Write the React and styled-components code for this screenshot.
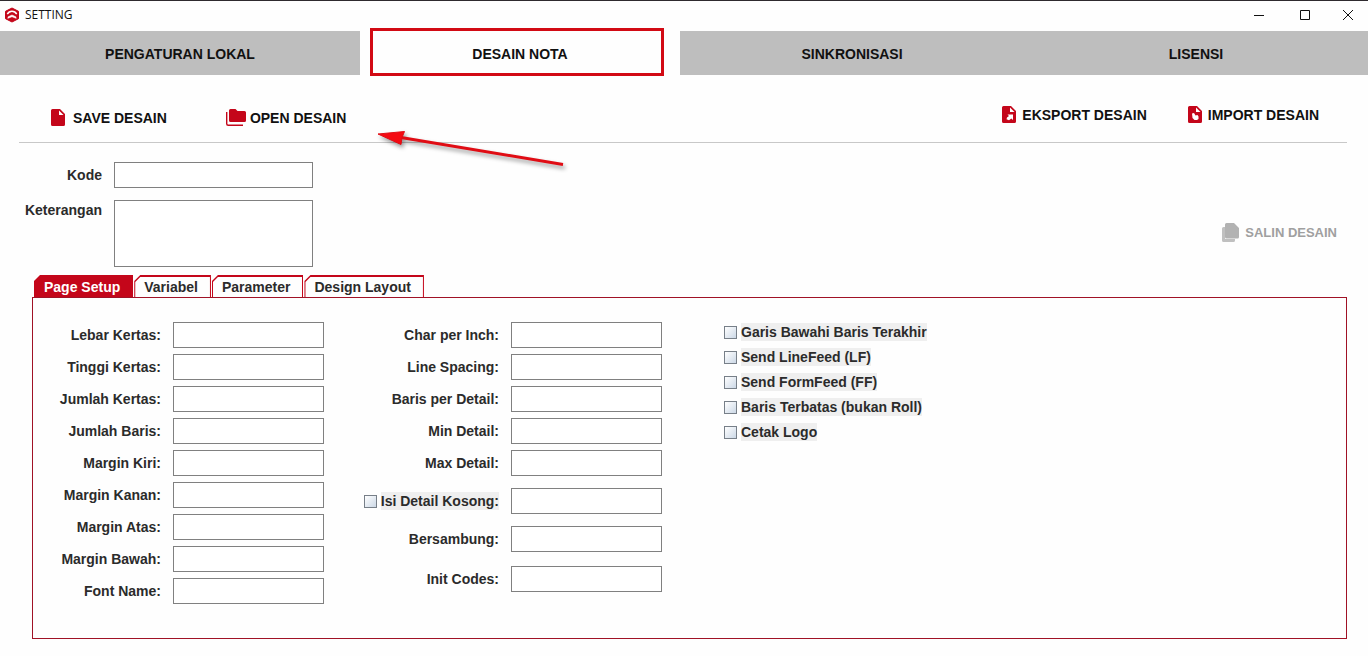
import React from "react";
import styled, { createGlobalStyle } from "styled-components";

const leftFields = [
  "Lebar Kertas:",
  "Tinggi Kertas:",
  "Jumlah Kertas:",
  "Jumlah Baris:",
  "Margin Kiri:",
  "Margin Kanan:",
  "Margin Atas:",
  "Margin Bawah:",
  "Font Name:",
];

const middleFields = [
  "Char per Inch:",
  "Line Spacing:",
  "Baris per Detail:",
  "Min Detail:",
  "Max Detail:",
];

const options = [
  "Garis Bawahi Baris Terakhir",
  "Send LineFeed (LF)",
  "Send FormFeed (FF)",
  "Baris Terbatas (bukan Roll)",
  "Cetak Logo",
];

const navItems = ["PENGATURAN LOKAL", "DESAIN NOTA", "SINKRONISASI", "LISENSI"];
const tabs = ["Page Setup", "Variabel", "Parameter", "Design Layout"];

const toId = (label) => label.toLowerCase().replace(/[^a-z]+/g, "-");

const LogoIcon = () => (
  <svg width="16" height="16" viewBox="0 0 16 16" fill="none">
    <path d="M8 1 14.500 4.300v7.400L8 15 1.500 11.700V4.300z" fill="#c4061a" stroke="#c4061a" strokeLinejoin="round" />
    <path d="M3.300 7.200C4.500 5 6 4.300 8 4.300s3.500.7 4.700 2.900" stroke="#fff" strokeWidth="1.400" />
    <path d="M3.800 11.300 4.200 9.800 8 8l3.800 1.800.4 1.500L8 9.700z" fill="#fff" stroke="#fff" strokeWidth="0.600" />
  </svg>
);

const FileIcon = () => (
  <svg width="14" height="17" viewBox="0 0 14 17">
    <path d="M1.500 0H9l5 5v10.500A1.500 1.500 0 0 1 12.500 17h-11A1.500 1.500 0 0 1 0 15.500v-14A1.500 1.500 0 0 1 1.500 0z" fill="#c4061a" />
    <path d="M8 1.500V6h4.500z" fill="#fff" />
  </svg>
);

const FoldersIcon = () => (
  <svg width="20" height="17" viewBox="0 0 20 17">
    <path d="M4.500 0h5l2 2H18.500A1.500 1.500 0 0 1 20 3.500v8A1.500 1.500 0 0 1 18.500 13h-14A1.500 1.500 0 0 1 3 11.500v-10A1.500 1.500 0 0 1 4.500 0z" fill="#c4061a" />
    <path d="M0.700 3v11.800a1.500 1.500 0 0 0 1.500 1.500H17" fill="none" stroke="#c4061a" strokeWidth="1.400" />
  </svg>
);

const ExportIcon = () => (
  <svg width="14" height="17" viewBox="0 0 14 17">
    <path d="M1.500 0H9l5 5v10.500A1.500 1.500 0 0 1 12.500 17h-11A1.500 1.500 0 0 1 0 15.500v-14A1.500 1.500 0 0 1 1.500 0z" fill="#c4061a" />
    <path d="M8 1.500V6h4.500z" fill="#fff" />
    <path d="M5.500 8.500H11V14L9.300 12.500 7 14.300 4.500 13.300 5 11.500 7 10z" fill="#fff" />
  </svg>
);

const ImportIcon = () => (
  <svg width="14" height="17" viewBox="0 0 14 17">
    <path d="M1.500 0H9l5 5v10.500A1.500 1.500 0 0 1 12.500 17h-11A1.500 1.500 0 0 1 0 15.500v-14A1.500 1.500 0 0 1 1.500 0z" fill="#c4061a" />
    <path d="M8 1.500V6h4.500z" fill="#fff" />
    <path d="M4 7.500 6 7l1.500 2.500 2-.5 1 1.500V13L9 14H6.500L4.500 12z" fill="#fff" />
  </svg>
);

const CopyIcon = () => (
  <svg width="17" height="19" viewBox="0 0 17 19">
    <path d="M1.500 4H3v12h10v1.500A1.500 1.500 0 0 1 11.500 19h-10A1.500 1.500 0 0 1 0 17.500v-12A1.500 1.500 0 0 1 1.500 4z" fill="#c0c0c0" />
    <path d="M4.500 0H12l5 5v9a1.500 1.500 0 0 1-1.500 1.500h-11A1.500 1.500 0 0 1 3 14V1.500A1.500 1.500 0 0 1 4.500 0z" fill="#b2b2b2" />
  </svg>
);

const Pointer = () => (
  <PointerSvg width="200" height="52" viewBox="0 0 200 52">
    <path d="M26 13.500 188 40.500" stroke="#e00c14" strokeWidth="3" />
    <path d="M3 10 29.500 7.500 27 13.500 26 20.500z" fill="#f40a12" stroke="#e00c14" />
  </PointerSvg>
);

const Field = ({ label }) => (
  <>
    <Label htmlFor={toId(label)}>{label}</Label>
    <Input id={toId(label)} type="text" />
  </>
);

const Option = ({ label }) => (
  <CheckLabel>
    <Checkbox type="checkbox" />
    <CheckText>{label}</CheckText>
  </CheckLabel>
);

const App = () => {
  return (
    <>
      <GlobalStyle />
      <TitleBar>
        <LogoIcon />
        <Title>SETTING</Title>
        <WindowButton aria-label="Minimize">
          <svg width="12" height="12" viewBox="0 0 12 12" stroke="#111"><path d="M1 6.500h10" /></svg>
        </WindowButton>
        <WindowButton aria-label="Maximize">
          <svg width="12" height="12" viewBox="0 0 12 12" stroke="#111" fill="none"><path d="M1.500 1.500h9v9h-9z" /></svg>
        </WindowButton>
        <WindowButton aria-label="Close">
          <svg width="12" height="12" viewBox="0 0 12 12" stroke="#111"><path d="m1 1 10 10M11 1 1 11" /></svg>
        </WindowButton>
      </TitleBar>

      <Nav>
        {navItems.map((item) => (
          <NavButton key={item} $active={item === "DESAIN NOTA"}>{item}</NavButton>
        ))}
      </Nav>

      <Main>
        <Toolbar>
          <ToolGroup $gap="59px">
            <ToolButton $gap="8px"><FileIcon />SAVE DESAIN</ToolButton>
            <ToolButton $gap="4px"><FoldersIcon />OPEN DESAIN</ToolButton>
          </ToolGroup>
          <ToolGroup $gap="41px" $raised>
            <ToolButton $gap="6px"><ExportIcon />EKSPORT DESAIN</ToolButton>
            <ToolButton $gap="6px"><ImportIcon />IMPORT DESAIN</ToolButton>
          </ToolGroup>
          <Pointer />
        </Toolbar>

        <Header>
          <HeaderForm>
            <Label htmlFor="kode">Kode</Label>
            <Input id="kode" type="text" />
            <Label htmlFor="keterangan" $top="1px">Keterangan</Label>
            <TextArea id="keterangan" />
          </HeaderForm>
          <CopyButton $gap="6px" disabled><CopyIcon />SALIN DESAIN</CopyButton>
        </Header>

        <Tabs role="tablist">
          {tabs.map((tab, i) => (
            <Tab key={tab} role="tab" aria-selected={i === 0} $active={i === 0}>
              <span>{tab}</span>
            </Tab>
          ))}
        </Tabs>

        <Panel role="tabpanel">
          <Fields $labelWidth="128px">
            {leftFields.map((label) => <Field key={label} label={label} />)}
          </Fields>
          <MiddleColumn>
            <Fields $labelWidth="140px">
              {middleFields.map((label) => <Field key={label} label={label} />)}
            </Fields>
            <Fields $labelWidth="140px" $gap="12px">
              <Option label="Isi Detail Kosong:" />
              <Input type="text" aria-label="Isi Detail Kosong" />
              <Field label="Bersambung:" />
            </Fields>
            <Fields $labelWidth="140px">
              <Field label="Init Codes:" />
            </Fields>
          </MiddleColumn>
          <Options>
            {options.map((label) => <Option key={label} label={label} />)}
          </Options>
        </Panel>
      </Main>
    </>
  );
};

const GlobalStyle = createGlobalStyle`
  * {
    box-sizing: border-box;
  }

  body {
    margin: 0;
    background: #fefefe;
    color: #2b2b2b;
    font: bold 14px/18px "Liberation Sans", Arial, sans-serif;
  }

  button, input, textarea {
    font: inherit;
  }

  button {
    border: 0;
    padding: 0;
    background: none;
    color: #111;
  }
`;

const TitleBar = styled.header`
  display: flex;
  align-items: center;
  height: 31px;
  padding: 0 0 2px 4px;
  border-top: 1px solid #2e2a2e;
`;

const Title = styled.span`
  flex: 1;
  margin-left: 5px;
  color: #111;
  font: 12px/16px "Open Sans", "Noto Sans", sans-serif;
`;

const WindowButton = styled.button`
  display: grid;
  place-items: center;
  width: 46px;
  height: 28px;

  &:last-child {
    width: 40px;
  }
`;

const Nav = styled.nav`
  display: grid;
  grid-template-columns: 360fr 320fr 344fr 344fr;
`;

const NavButton = styled.button`
  position: relative;
  height: 44px;
  padding-top: 2px;
  background: ${({ $active }) => ($active ? "#fefefe" : "#bebebe")};

  /* frame around the selected section */
  &::after {
    content: "";
    display: ${({ $active }) => ($active ? "block" : "none")};
    position: absolute;
    inset: -3px 16px -1px 10px;
    border: 3px solid #d20a14;
  }
`;

const Main = styled.main`
  padding: 0 21px 0 19px;
`;

const Toolbar = styled.div`
  position: relative;
  display: flex;
  justify-content: space-between;
  align-items: center;
  height: 68px;
  padding: 18px 28px 0 32px;
  border-bottom: 1px solid #c8c8c8;
`;

const ToolGroup = styled.div`
  display: flex;
  gap: ${({ $gap }) => $gap};
  margin-bottom: ${({ $raised }) => ($raised ? "6px" : "0")};
`;

const ToolButton = styled.button`
  display: flex;
  align-items: center;
  gap: ${({ $gap }) => $gap};

  &:disabled {
    color: #a0a0a0;
  }
`;

const CopyButton = styled(ToolButton)`
  align-self: flex-end;
  margin-bottom: 25px;
  font-size: 13px;
`;

const PointerSvg = styled.svg`
  position: absolute;
  top: 49px;
  left: 356px;
  filter: drop-shadow(2px 3px 2px rgba(0, 0, 0, 0.4));
`;

const Header = styled.div`
  display: flex;
  justify-content: space-between;
  align-items: center;
  padding: 19px 10px 8px 0;
`;

const HeaderForm = styled.div`
  display: grid;
  grid-template-columns: 83px 199px;
  column-gap: 12px;
  row-gap: 12px;
`;

const Label = styled.label`
  padding-top: ${({ $top }) => $top || "4px"};
  text-align: right;
  white-space: nowrap;
`;

const Input = styled.input`
  width: 100%;
  height: 26px;
  padding: 0 4px;
  border: 1px solid #808080;
  background: #fff;
`;

const TextArea = styled.textarea`
  display: block;
  height: 67px;
  border: 1px solid #808080;
  background: #fff;
  resize: none;
`;

const Tabs = styled.div`
  display: flex;
  gap: 1px;
  margin-left: 15px;
`;

const Tab = styled.button`
  height: 22px;
  padding: 2px 1px 0;
  background: #c4061a;
  clip-path: polygon(6px 0, 100% 0, 100% 100%, 0 100%, 0 6px);

  span {
    display: block;
    height: 20px;
    padding: 0 12px 0 9px;
    line-height: 20px;
    color: ${({ $active }) => ($active ? "#fff" : "#2b2b2b")};
    background: ${({ $active }) => ($active ? "#c4061a" : "#fefefe")};
    clip-path: polygon(5px 0, 100% 0, 100% 100%, 0 100%, 0 5px);
  }
`;

const Panel = styled.section`
  display: flex;
  align-items: flex-start;
  min-height: 342px;
  margin-left: 13px;
  padding: 24px 0;
  border: 1px solid #a01226;
`;

const Fields = styled.div`
  display: grid;
  grid-template-columns: ${({ $labelWidth }) => $labelWidth} 151px;
  column-gap: 12px;
  row-gap: ${({ $gap }) => $gap || "6px"};
`;

const MiddleColumn = styled.div`
  display: flex;
  flex-direction: column;
  gap: 12px;
  margin-left: 35px;

  > :last-child {
    padding-top: 2px;
  }
`;

const Options = styled.div`
  display: flex;
  flex-direction: column;
  align-items: flex-start;
  gap: 7px;
  padding-top: 1px;
  margin-left: 62px;
`;

const CheckLabel = styled.label`
  display: flex;
  align-items: center;
  justify-self: end;
  gap: 4px;
`;

const CheckText = styled.span`
  background: #efefef;
  white-space: nowrap;
`;

const Checkbox = styled.input`
  appearance: none;
  width: 13px;
  height: 13px;
  margin: 0;
  border: 1px solid #777f88;
  background: linear-gradient(135deg, #fff, #ccd8e6);
`;

export default App;
